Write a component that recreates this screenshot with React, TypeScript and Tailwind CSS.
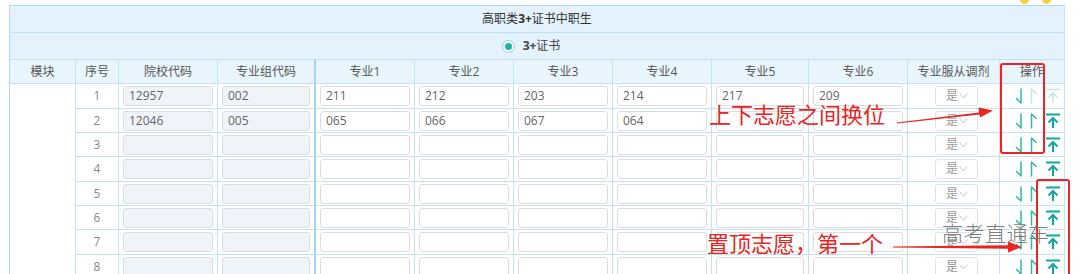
import React from "react";

const line = "border-r border-b border-[#c3e2f4]";
const font = "font-['Open_Sans','Noto_Sans_CJK_SC',sans-serif]";

const data: string[][] = [
  ["12957", "002", "211", "212", "203", "214", "217", "209"],
  ["12046", "005", "065", "066", "067", "064", "", ""],
  ["", "", "", "", "", "", "", ""],
  ["", "", "", "", "", "", "", ""],
  ["", "", "", "", "", "", "", ""],
  ["", "", "", "", "", "", "", ""],
  ["", "", "", "", "", "", "", ""],
  ["", "", "", "", "", "", "", ""],
];

const headers = ["模块", "序号", "院校代码", "专业组代码", "专业1", "专业2", "专业3", "专业4", "专业5", "专业6", "专业服从调剂", "操作"];

function DownIcon() {
  return (
    <svg width="10" height="16" viewBox="0 0 10 16" fill="none">
      <path d="M7 1 V15 L2.5 10.5" stroke="#33b6b0" strokeWidth="1.5" strokeLinecap="round" strokeLinejoin="round" />
    </svg>
  );
}

function UpIcon({ faded }: { faded: boolean }) {
  return (
    <svg width="10" height="16" viewBox="0 0 10 16" fill="none">
      <path d="M3.5 15 V1 L8 5.5" stroke={faded ? "#bfe7e5" : "#33b6b0"} strokeWidth="1.5" strokeLinecap="round" strokeLinejoin="round" />
    </svg>
  );
}

function TopIcon({ faded }: { faded: boolean }) {
  const c = faded ? "#bfe7e5" : "#12a5a3";
  return (
    <svg width="16" height="16" viewBox="0 0 16 16" fill="none">
      <path d="M1 1.5 H15" stroke={c} strokeWidth={faded ? 1.5 : 2} />
      <path d="M8 5 V15 M3.5 9.5 L8 5 L12.5 9.5" stroke={c} strokeWidth={faded ? 1.5 : 2} strokeLinejoin="miter" />
    </svg>
  );
}

function Input({ v, gray }: { v: string; gray: boolean }) {
  return (
    <div className={`${line} flex items-center pl-[4px] pr-[4px]`}>
      <div
        className={`h-[20px] w-full rounded-[3px] border border-[#dddddd] ${gray ? "bg-[#eef4fa]" : "bg-white"} flex items-center pl-[5px] text-[12px] text-[#666666]`}
      >
        {v}
      </div>
    </div>
  );
}

export default function App() {
  return (
    <div className={`relative w-[1080px] h-[274px] overflow-hidden bg-white ${font}`}>
      <div className="ml-[9px] mt-[5px] w-[1056px] grid grid-cols-[66px_43px_99px_98px_99px_99px_99px_99px_97px_99px_92px_65px] grid-rows-[27px_27px_24px_25px_24px_24px_25px_24px_24px_25px_24px] border-l border-t border-[#acd8f0]">
        <div className={`col-span-12 ${line} bg-[#e3f2fc] flex items-center justify-center text-[12px] text-[#333333]`}>
          <span>高职类</span>
          <span className="font-bold">3+</span>
          <span>证书中职生</span>
        </div>
        <div className={`col-span-12 ${line} bg-[#e3f2fc] flex items-center justify-center text-[12px] text-[#444444]`}>
          <div className="flex items-center mr-[12px]">
            <div className="w-[13px] h-[13px] rounded-full border border-[#8fd5d1] bg-white flex items-center justify-center">
              <div className="w-[7px] h-[7px] rounded-full bg-[#1db3ad]" />
            </div>
            <span className="ml-[8px] font-bold">3+</span>
            <span>证书</span>
          </div>
        </div>
        {headers.map((h, i) => (
          <div
            key={h}
            className={`${i === 3 ? "border-r-2 border-b border-[#c3e2f4] border-r-[#a6d4f0]" : line} bg-[#e8f5fd] flex items-center justify-center text-[12px] text-[#555555]`}
          >
            {h}
          </div>
        ))}
        <div className={`row-span-8 ${line} bg-white`} />
        {data.map((r, ri) => (
          <React.Fragment key={ri}>
            <div className={`${line} flex items-center justify-center text-[12px] text-[#888888]`}>{ri + 1}</div>
            <Input v={r[0]} gray={true} />
            <div className="border-r-2 border-b border-[#c3e2f4] border-r-[#a6d4f0] flex items-center pl-[4px] pr-[4px]">
              <div className="h-[20px] w-full rounded-[3px] border border-[#dddddd] bg-[#eef4fa] flex items-center pl-[5px] text-[12px] text-[#666666]">
                {r[1]}
              </div>
            </div>
            <Input v={r[2]} gray={false} />
            <Input v={r[3]} gray={false} />
            <Input v={r[4]} gray={false} />
            <Input v={r[5]} gray={false} />
            <Input v={r[6]} gray={false} />
            <Input v={r[7]} gray={false} />
            <div className={`${line} flex items-center pl-[27px]`}>
              <div className="h-[20px] w-[43px] rounded-[3px] border border-[#e3e3e3] bg-white flex items-center pl-[10px] text-[12px] text-[#999999]">
                <span>是</span>
                <svg width="9" height="6" viewBox="0 0 9 6" fill="none" className="ml-[1px]">
                  <path d="M0.5 0.5 L4.5 5 L8.5 0.5" stroke="#c4c4c4" strokeWidth="1" />
                </svg>
              </div>
            </div>
            <div className={`${line} flex items-center pl-[14px]`}>
              <DownIcon />
              <div className="ml-[4px]">
                <UpIcon faded={ri === 0} />
              </div>
              <div className="ml-[7px]">
                <TopIcon faded={ri === 0} />
              </div>
            </div>
          </React.Fragment>
        ))}
      </div>

      {/* yellow dots at top edge */}
      <div className="absolute left-[1020px] top-[-5px] w-[9px] h-[9px] rounded-full bg-[#f4d03f]" />
      <div className="absolute left-[1042px] top-[-5px] w-[9px] h-[9px] rounded-full bg-[#f4d03f]" />

      {/* annotation 1 */}
      <div className="absolute left-[1000px] top-[63px] w-[45px] h-[91px] border-2 border-[#e8262a] rounded-[3px]" />
      <div className="absolute left-[709px] top-[102px] text-[22px] leading-[22px] text-[#e8261f] font-['Noto_Sans_CJK_SC',sans-serif] font-normal whitespace-nowrap">
        上下志愿之间换位
      </div>
      <svg className="absolute left-[890px] top-[100px]" width="110" height="30" viewBox="890 100 110 30">
        <polygon points="897,122.5 979,112.4 978.5,107.6 993,110.6 980,117.4 979.4,114.4 897,123.5" fill="#e8261f" />
      </svg>

      {/* annotation 2 */}
      <div className="absolute left-[1036px] top-[179px] w-[34px] h-[120px] border-2 border-[#e8262a] rounded-[3px]" />
      <div className="absolute left-[707px] top-[231px] text-[22px] leading-[22px] text-[#e8261f] font-['Noto_Sans_CJK_SC',sans-serif] font-normal whitespace-nowrap">
        置顶志愿，第一个
      </div>
      <svg className="absolute left-[890px] top-[235px]" width="135" height="25" viewBox="890 235 135 25">
        <polygon points="893,246.5 1008,245.3 1008,241.5 1022,247 1008,252.5 1008,248.7 893,247.5" fill="#e8261f" />
      </svg>

      {/* watermark */}
      <div className="absolute left-[942px] top-[220px] text-[21px] leading-[24px] tracking-[0.5px] text-[#7d7d7d] font-['Noto_Sans_CJK_SC',sans-serif] font-light whitespace-nowrap">
        高考直通车
      </div>
    </div>
  );
}
